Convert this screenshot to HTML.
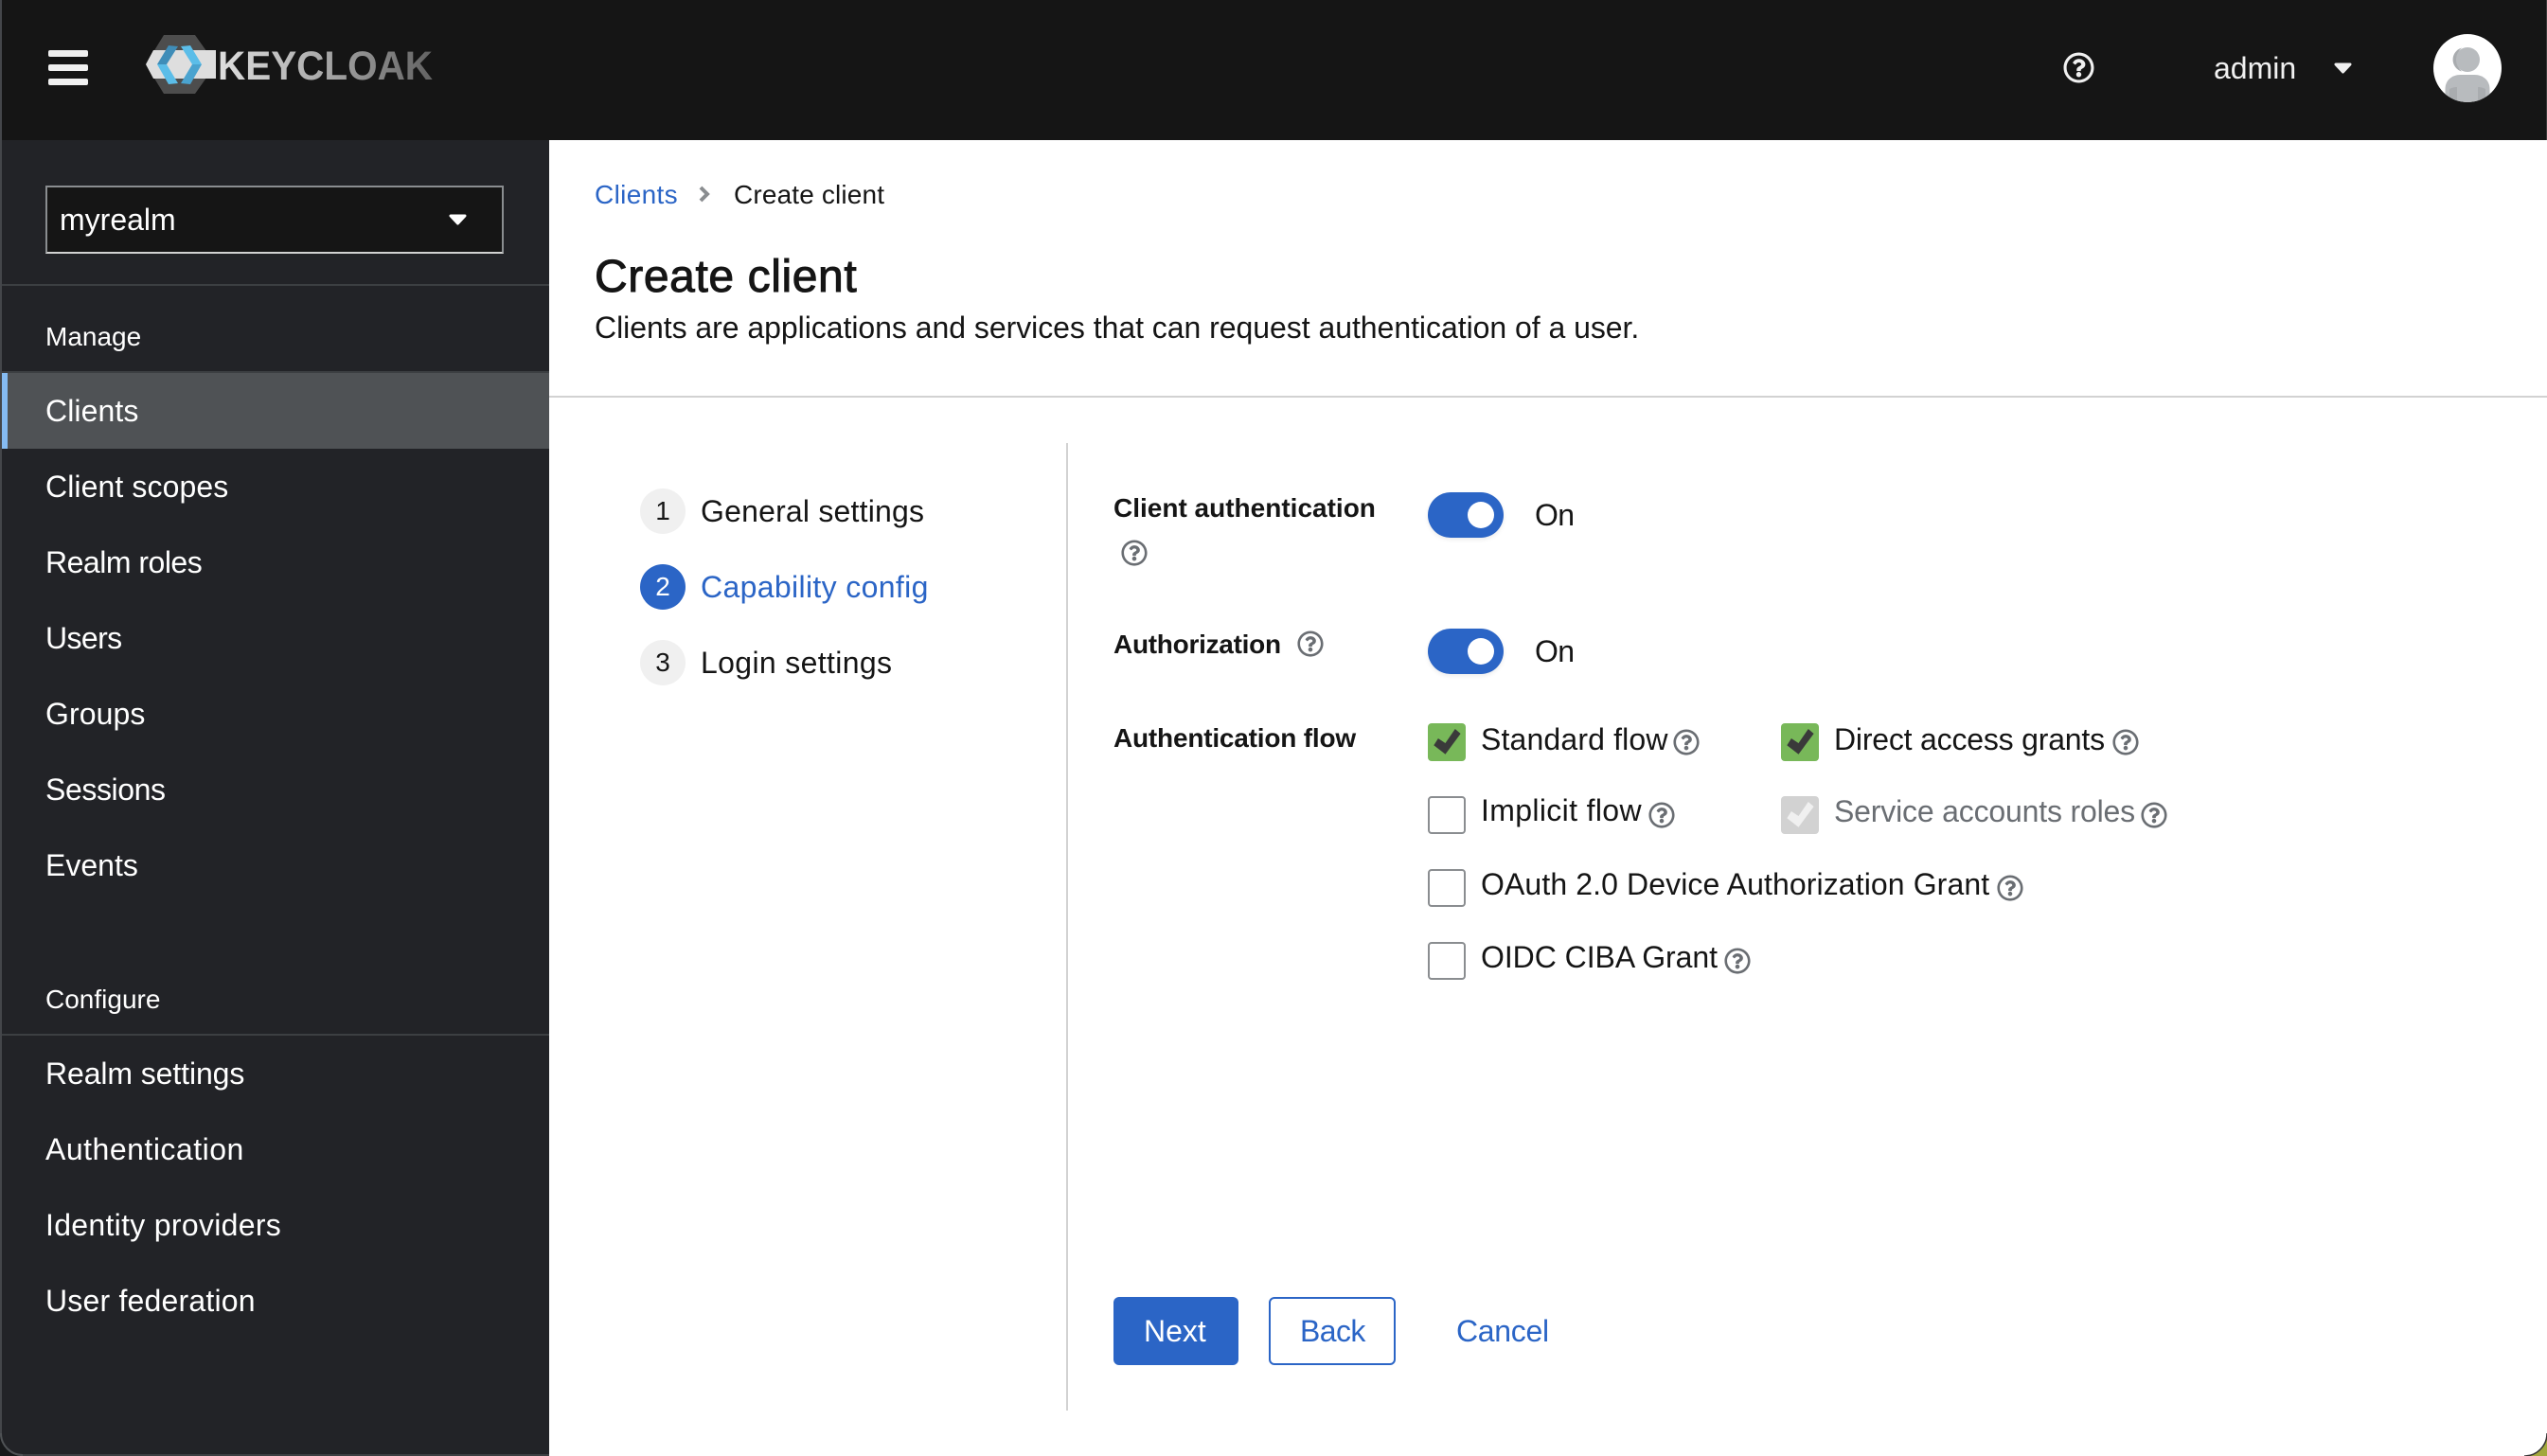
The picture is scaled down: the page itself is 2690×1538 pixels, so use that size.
<!DOCTYPE html>
<html lang="en">
<head>
<meta charset="utf-8">
<title>Keycloak - Create client</title>
<style>
html,body{margin:0;padding:0;background:#fff}
body{position:relative;width:2690px;height:1538px;overflow:hidden;font-family:"Liberation Sans",sans-serif;color:#151515}
.b{position:absolute;box-sizing:border-box}
.t{position:absolute;white-space:nowrap;line-height:1;font-size:32px}
.s{font-size:28px}
.w{color:#fff}
.blue{color:#2b65c6}
.lab{font-size:28px;font-weight:bold;color:#151515}
.cb{position:absolute;box-sizing:border-box;width:40px;height:40px;border-radius:4px;border:2px solid #8a8d90;background:#fff}
.ck{position:absolute;width:40px;height:40px;border-radius:4px;background:#78b859}
.ck svg{position:absolute;left:0;top:0}
.dis{background:#d2d2d2}
.tog{position:absolute;left:1508px;width:80px;height:48px;border-radius:24px;background:#2b65c6;box-shadow:0 2px 5px rgba(3,3,3,.08)}
.tog i{position:absolute;left:42px;top:10px;width:28px;height:28px;border-radius:50%;background:#fff}
.st{position:absolute;left:676px;width:48px;height:48px;border-radius:50%;background:#f0f0f0;text-align:center;font-size:28px;line-height:48px;color:#151515}
.h{position:absolute;width:28px;height:28px;fill:#6a6e73}
svg{display:block;overflow:visible}
</style>
</head>
<body>
<svg width="0" height="0" style="position:absolute"><symbol id="q" viewBox="0 0 512 512"><path d="M256 8C119.043 8 8 119.083 8 256c0 136.997 111.043 248 248 248s248-111.003 248-248C504 119.083 392.957 8 256 8zm0 448c-110.532 0-200-89.431-200-200 0-110.495 89.472-200 200-200 110.491 0 200 89.471 200 200 0 110.53-89.431 200-200 200zm107.244-255.2c0 67.052-72.421 68.084-72.421 92.863V300c0 6.627-5.373 12-12 12h-45.647c-6.627 0-12-5.373-12-12v-8.659c0-35.745 27.1-50.034 47.579-61.516 17.561-9.845 28.324-16.541 28.324-29.579 0-17.246-21.999-28.693-39.784-28.693-23.189 0-33.894 10.977-48.942 29.969-4.057 5.12-11.46 6.071-16.666 2.124l-27.824-21.098c-5.107-3.872-6.251-11.066-2.644-16.363C184.846 131.491 214.94 112 261.794 112c49.071 0 101.45 38.304 101.45 88.8zM298 368c0 23.159-18.841 42-42 42s-42-18.841-42-42 18.841-42 42-42 42 18.841 42 42z"/></symbol></svg>

<!-- Header -->
<div class="b" style="left:0;top:0;width:2690px;height:148px;background:#151515"></div>
<div class="b" style="left:51px;top:53px;width:42px;height:7px;border-radius:2px;background:#f0f0f0"></div>
<div class="b" style="left:51px;top:68px;width:42px;height:7px;border-radius:2px;background:#f0f0f0"></div>
<div class="b" style="left:51px;top:83px;width:42px;height:7px;border-radius:2px;background:#f0f0f0"></div>

<svg class="b" style="left:0;top:0" width="480" height="148" viewBox="0 0 480 148">
  <defs>
    <linearGradient id="kg" x1="230" x2="457" y1="0" y2="0" gradientUnits="userSpaceOnUse">
      <stop offset="0" stop-color="#dedede"/><stop offset=".4" stop-color="#b4b4b4"/><stop offset=".7" stop-color="#8c8c8c"/><stop offset="1" stop-color="#626262"/>
    </linearGradient>
  </defs>
  <polygon points="173,37 206,37 228,68 206,99 173,99 154,68" fill="#4d4d4d"/>
  <polygon points="162,53 228,53 228,83 162,83 154,68" fill="#dedede"/>
  <polygon points="166,68 178,48 188,49 176,68" fill="#3f8db8"/>
  <polygon points="166,68 176,68 188,88 178,89" fill="#5bbde8"/>
  <polygon points="191,49 201,48 213,68 203,68" fill="#5bbde8"/>
  <polygon points="203,68 213,68 201,89 191,88" fill="#4aa3cf"/>
  <text x="230" y="84" font-family="'Liberation Sans',sans-serif" font-weight="bold" font-size="43" textLength="227" lengthAdjust="spacingAndGlyphs" fill="url(#kg)">KEYCLOAK</text>
</svg>

<svg class="b" style="left:2179px;top:55px;width:33px;height:33px;fill:#f0f0f0"><use href="#q" width="33" height="33"/></svg>
<div class="t" style="left:2338px;top:56px;color:#f0f0f0">admin</div>
<svg class="b" style="left:2465px;top:66px" width="20" height="12"><polygon points="2,2 17,2 9.5,10" fill="#f0f0f0" stroke="#f0f0f0" stroke-width="3" stroke-linejoin="round"/></svg>

<svg class="b" style="left:2570px;top:36px" width="72" height="72" viewBox="0 0 72 72">
  <defs><clipPath id="av"><circle cx="36" cy="36" r="36"/></clipPath></defs>
  <circle cx="36" cy="36" r="36" fill="#fff"/>
  <g clip-path="url(#av)">
    <ellipse cx="36" cy="27" rx="13" ry="13" fill="#b8bbbe"/>
    <path d="M30 14.500a13 13 0 0 0 0 25a16 16 0 0 1 0-25z" fill="#a9acaf"/>
    <path d="M12.500 72v-14c0-9 7-15 16-15h15c9 0 16 6 16 15v14z" fill="#b8bbbe"/>
    <path d="M17 72V58c4-2 6-2 8-2v16zM47 56c2 0 4 0 8 2v14h-8z" fill="#a9acaf"/>
  </g>
</svg>

<!-- Sidebar -->
<div class="b" style="left:0;top:148px;width:580px;height:1390px;background:#222327"></div>
<div class="b" style="left:48px;top:196px;width:484px;height:72px;background:#151515;border:2px solid #8a8d90;border-bottom-color:#d2d2d2"></div>
<div class="t w" style="left:63px;top:216px">myrealm</div>
<svg class="b" style="left:474px;top:226px" width="20" height="12"><polygon points="2,2 17,2 9.500,10" fill="#fff" stroke="#fff" stroke-width="3" stroke-linejoin="round"/></svg>

<div class="b" style="left:0;top:300px;width:580px;height:2px;background:#3c3f42"></div>
<div class="t s w" style="left:48px;top:342px">Manage</div>
<div class="b" style="left:0;top:392px;width:580px;height:2px;background:#3c3f42"></div>
<div class="b" style="left:0;top:394px;width:580px;height:80px;background:#4f5255"></div>
<div class="b" style="left:0;top:394px;width:8px;height:80px;background:#85bbf2"></div>
<div class="t w" style="left:48px;top:418px;letter-spacing:.1px">Clients</div>
<div class="t w" style="left:48px;top:498px;letter-spacing:.1px">Client scopes</div>
<div class="t w" style="left:48px;top:578px;letter-spacing:-.5px">Realm roles</div>
<div class="t w" style="left:48px;top:658px;letter-spacing:-.6px">Users</div>
<div class="t w" style="left:48px;top:738px;letter-spacing:.1px">Groups</div>
<div class="t w" style="left:48px;top:818px;letter-spacing:-.4px">Sessions</div>
<div class="t w" style="left:48px;top:898px">Events</div>
<div class="t s w" style="left:48px;top:1042px">Configure</div>
<div class="b" style="left:0;top:1092px;width:580px;height:2px;background:#3c3f42"></div>
<div class="t w" style="left:48px;top:1118px;letter-spacing:-.1px">Realm settings</div>
<div class="t w" style="left:48px;top:1198px;letter-spacing:.5px">Authentication</div>
<div class="t w" style="left:48px;top:1278px;letter-spacing:.3px">Identity providers</div>
<div class="t w" style="left:48px;top:1358px;letter-spacing:.2px">User federation</div>

<!-- Breadcrumb & title -->
<div class="t s blue" style="left:628px;top:192px;letter-spacing:.35px">Clients</div>
<svg class="b" style="left:736px;top:195px" width="18" height="20"><path d="M4 3l7 7-7 7" fill="none" stroke="#8a8d90" stroke-width="4"/></svg>
<div class="t s" style="left:775px;top:192px;letter-spacing:.15px">Create client</div>
<div class="t" style="left:628px;top:269px;font-size:48px;letter-spacing:.6px;-webkit-text-stroke:1px #151515">Create client</div>
<div class="t" style="left:628px;top:330px;letter-spacing:-.04px">Clients are applications and services that can request authentication of a user.</div>
<div class="b" style="left:580px;top:418px;width:2110px;height:2px;background:#d2d2d2"></div>

<!-- Wizard nav -->
<div class="st" style="top:516px">1</div>
<div class="t" style="left:740px;top:524px;letter-spacing:.2px">General settings</div>
<div class="st" style="top:596px;background:#2b65c6;color:#fff">2</div>
<div class="t blue" style="left:740px;top:604px;letter-spacing:.35px">Capability config</div>
<div class="st" style="top:676px">3</div>
<div class="t" style="left:740px;top:684px;letter-spacing:.35px">Login settings</div>
<div class="b" style="left:1126px;top:468px;width:2px;height:1022px;background:#d2d2d2"></div>

<!-- Form -->
<div class="t lab" style="left:1176px;top:523px">Client authentication</div>
<svg class="h" style="left:1184px;top:570px"><use href="#q" width="28" height="28"/></svg>
<div class="tog" style="top:520px"><i></i></div>
<div class="t" style="left:1621px;top:528px;letter-spacing:-.7px">On</div>

<div class="t lab" style="left:1176px;top:667px;letter-spacing:-.28px">Authorization</div>
<svg class="h" style="left:1370px;top:666px"><use href="#q" width="28" height="28"/></svg>
<div class="tog" style="top:664px"><i></i></div>
<div class="t" style="left:1621px;top:672px;letter-spacing:-.7px">On</div>

<div class="t lab" style="left:1176px;top:766px;letter-spacing:-.2px">Authentication flow</div>

<div class="ck" style="left:1508px;top:764px"><svg width="40" height="40"><polygon points="6.300,23.300 18.500,32.700 34.600,11 28.800,6 18.500,21 10.900,16" fill="#3a3a3a"/></svg></div>
<div class="t" style="left:1564px;top:765px;letter-spacing:.15px">Standard flow</div>
<svg class="h" style="left:1767px;top:770px"><use href="#q" width="28" height="28"/></svg>

<div class="ck" style="left:1881px;top:764px"><svg width="40" height="40"><polygon points="6.300,23.300 18.500,32.700 34.600,11 28.800,6 18.500,21 10.900,16" fill="#3a3a3a"/></svg></div>
<div class="t" style="left:1937px;top:765px;letter-spacing:-.2px">Direct access grants</div>
<svg class="h" style="left:2231px;top:770px"><use href="#q" width="28" height="28"/></svg>

<div class="cb" style="left:1508px;top:841px"></div>
<div class="t" style="left:1564px;top:840px;letter-spacing:.35px">Implicit flow</div>
<svg class="h" style="left:1741px;top:847px"><use href="#q" width="28" height="28"/></svg>

<div class="ck dis" style="left:1881px;top:841px"><svg width="40" height="40"><polygon points="6.300,23.300 18.500,32.700 34.600,11 28.800,6 18.500,21 10.900,16" fill="#f0f0f0"/></svg></div>
<div class="t" style="left:1937px;top:841px;letter-spacing:-.18px;color:#6a6e73">Service accounts roles</div>
<svg class="h" style="left:2261px;top:847px"><use href="#q" width="28" height="28"/></svg>

<div class="cb" style="left:1508px;top:918px"></div>
<div class="t" style="left:1564px;top:918px;letter-spacing:.1px">OAuth 2.0 Device Authorization Grant</div>
<svg class="h" style="left:2109px;top:924px"><use href="#q" width="28" height="28"/></svg>

<div class="cb" style="left:1508px;top:995px"></div>
<div class="t" style="left:1564px;top:995px;letter-spacing:-.05px">OIDC CIBA Grant</div>
<svg class="h" style="left:1821px;top:1001px"><use href="#q" width="28" height="28"/></svg>

<!-- Buttons -->
<div class="b" style="left:1176px;top:1370px;width:132px;height:72px;border-radius:6px;background:#2b65c6"></div>
<div class="t w" style="left:1208px;top:1390px">Next</div>
<div class="b" style="left:1340px;top:1370px;width:134px;height:72px;border-radius:6px;border:2px solid #2b65c6"></div>
<div class="t blue" style="left:1373px;top:1390px;letter-spacing:-.6px">Back</div>
<div class="t blue" style="left:1538px;top:1390px;letter-spacing:-.3px">Cancel</div>

<!-- Window chrome -->
<div class="b" style="left:0;top:0;width:2px;height:1538px;background:#44464a"></div>
<div class="b" style="left:2689px;top:0;width:1px;height:148px;background:#3a3a3a"></div>
<div class="b" style="left:0;top:1536px;width:580px;height:2px;background:#3c3f42"></div>
<svg class="b" style="left:0;top:1514px" width="24" height="24"><path d="M0 0A24 24 0 0 0 24 24H0z" fill="#17181a"/><path d="M1 0A23 23 0 0 0 24 23" fill="none" stroke="#4f5255" stroke-width="2"/></svg>
<svg class="b" style="left:2666px;top:1514px" width="24" height="24"><path d="M24 0A24 24 0 0 1 0 24H24z" fill="#a3a83c"/><path d="M24 0A24 24 0 0 1 0 24" fill="none" stroke="#333" stroke-width="1.500"/></svg>
</body>
</html>
